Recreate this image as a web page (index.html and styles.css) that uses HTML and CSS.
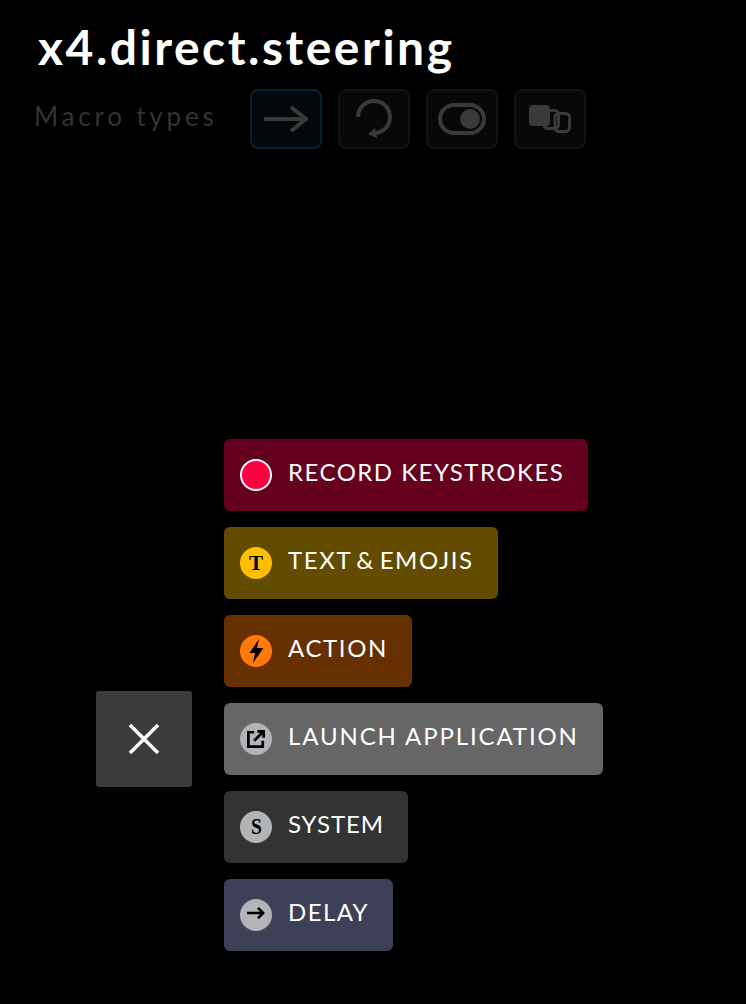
FILE: index.html
```html
<!DOCTYPE html>
<html lang="en">
<head>
<meta charset="utf-8">
<title>x4.direct.steering</title>
<link rel="stylesheet" href="styles.css">
</head>
<body>
<header class="header">
  <h1 class="title">x4.direct.steering</h1>
  <div class="types">
    <span class="types-label">Macro types</span>
    <div class="type-btn type-btn-active">
      <svg width="44" height="28" viewBox="0 0 44 28" fill="none" stroke="#3a3a3a" stroke-width="4"><path d="M0 14H42M27 2 42 14 27 26" stroke-linejoin="miter"/></svg>
    </div>
    <div class="type-btn">
      <svg width="44" height="44" viewBox="0 0 44 44" fill="none" stroke="#3a3a3a" stroke-width="4"><path d="M6 20A16 16 0 1 1 22 36H20"/><path d="M16 37 23 31 25 41z" fill="#3a3a3a" stroke="none"/></svg>
    </div>
    <div class="type-btn">
      <svg width="48" height="32" viewBox="0 0 48 32" fill="none"><rect x="2" y="2" width="44" height="28" rx="14" stroke="#3a3a3a" stroke-width="4"/><circle cx="32" cy="16" r="10" fill="#3a3a3a"/></svg>
    </div>
    <div class="type-btn">
      <svg width="44" height="30" viewBox="0 0 44 30" fill="none" stroke="#3a3a3a" stroke-width="3"><rect x="27" y="9.500" width="14.500" height="18" rx="4"/><rect x="16" y="6.500" width="14.500" height="18" rx="4"/><rect x="1" y="1" width="21" height="21" rx="4" fill="#3a3a3a" stroke="none"/></svg>
    </div>
  </div>
</header>
<main class="menu">
  <button class="close" type="button" aria-label="Close">
    <svg width="34" height="34" viewBox="0 0 34 34" stroke="#fff" stroke-width="3.500"><path d="M3 3 31 31M31 3 3 31"/></svg>
  </button>
  <ul class="items">
    <li class="item item-record"><span class="dot dot-record"></span><span class="item-label label-record">RECORD KEYSTROKES</span></li>
    <li class="item item-text"><span class="dot dot-text"><span class="serif">T</span></span><span class="item-label label-text">TEXT &amp; EMOJIS</span></li>
    <li class="item item-action"><span class="dot dot-action"><svg width="15" height="24" viewBox="0 0 14 24"><path d="M9.500 0 0 14H5.500L3.500 24 14 9H7.500z" fill="#000"/></svg></span><span class="item-label">ACTION</span></li>
    <li class="item item-launch"><span class="dot dot-grey"><svg width="18" height="18" viewBox="0 0 20 20" fill="none" stroke="#000" stroke-width="3"><path d="M8 2.500H1.500V18.500H17.500V12"/><path d="M8 12 18 2M11.500 1.500H18.500V8.500"/></svg></span><span class="item-label label-launch">LAUNCH APPLICATION</span></li>
    <li class="item item-system"><span class="dot dot-grey"><span class="serif serif-s">S</span></span><span class="item-label label-system">SYSTEM</span></li>
    <li class="item item-delay"><span class="dot dot-grey"><svg class="delay-arrow" width="18" height="12" viewBox="0 0 18 12" fill="none" stroke="#000" stroke-width="2.500"><path d="M0 6H16M11 .8 16.200 6 11 11.200"/></svg></span><span class="item-label label-delay">DELAY</span></li>
  </ul>
</main>
</body>
</html>
```
FILE: styles.css
```css
* { box-sizing: border-box; }
html, body { margin: 0; padding: 0; }
body {
  background: #000;
  color: #fff;
  font-family: "Lato", "Liberation Sans", sans-serif;
  height: 1004px;
  overflow: hidden;
}
.header { padding: 20px 0 0 34px; }
.title {
  margin: 0 0 0 4px;
  font-size: 48px;
  line-height: 54px;
  font-weight: 700;
  letter-spacing: 2.5px;
}
.types {
  display: flex;
  align-items: center;
  gap: 16px;
  margin-top: 15px;
}
.types-label {
  width: 200px;
  margin-bottom: 6px;
  font-size: 26px;
  letter-spacing: 3.8px;
  color: #333;
}
.type-btn {
  width: 72px;
  height: 60px;
  border: 2px solid #121212;
  border-radius: 8px;
  background: #080808;
  display: flex;
  align-items: center;
  justify-content: center;
}
.type-btn-active {
  border-color: #06222e;
  background: #03090b;
}
.menu {
  display: flex;
  margin: 290px 0 0 96px;
  gap: 32px;
}
.close {
  align-self: flex-end;
  width: 96px;
  height: 96px;
  margin-bottom: 164px;
  padding: 0;
  border: 0;
  border-radius: 3px;
  background: #3b3b3b;
  display: flex;
  align-items: center;
  justify-content: center;
}
.items {
  list-style: none;
  margin: 0;
  padding: 0;
  display: flex;
  flex-direction: column;
  align-items: flex-start;
  gap: 16px;
}
.item {
  height: 72px;
  padding: 0 24px 4px 16px;
  border-radius: 6px;
  display: flex;
  align-items: center;
  gap: 16px;
}
.item-label {
  font-size: 24px;
  line-height: 28px;
  letter-spacing: 1.6px;
  color: #fff;
  margin-bottom: 2px;
}
.label-record { letter-spacing: 1.48px; }
.label-text { word-spacing: -3px; }
.label-launch { letter-spacing: 1.88px; }
.label-system { letter-spacing: .93px; }
.label-delay { letter-spacing: 1.4px; }
.dot {
  width: 32px;
  height: 32px;
  border-radius: 50%;
  flex: none;
  display: flex;
  align-items: center;
  justify-content: center;
  color: #000;
  margin-top: 4px;
}
.serif {
  font-family: "Liberation Serif", serif;
  font-weight: 700;
  font-size: 21px;
  line-height: 20px;
}
.serif-s {
  font-size: 23px;
  transform: scaleX(.85);
}
.delay-arrow { margin-bottom: 4px; }
.item-record { background: #66001f; }
.item-text { background: #634c00; }
.item-action { background: #663000; }
.item-launch { background: #666; }
.item-system { background: #333; }
.item-delay { background: #3d4057; }
.dot-record { background: #ff0040; border: 2px solid #fff; }
.dot-text { background: #ffbf00; }
.dot-action { background: #ff7a0a; }
.dot-grey { background: #b3b3b8; }
```
